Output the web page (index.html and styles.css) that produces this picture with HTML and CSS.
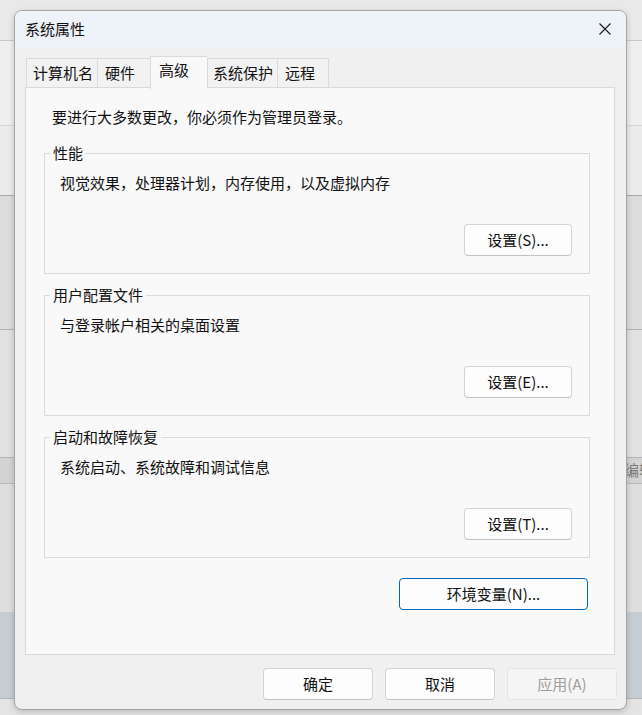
FILE: index.html
```html
<!DOCTYPE html>
<html lang="zh-CN">
<head>
<meta charset="utf-8">
<title>系统属性</title>
<link rel="stylesheet" href="styles.css">
</head>
<body>
<span class="bg-text">编辑</span>
<div class="dialog">
  <div class="titlebar">
    <span class="title">系统属性</span>
    <span class="close" aria-label="关闭">
      <svg width="12" height="12" viewBox="0 0 12 12"><path d="M0.5 0.5 L11.5 11.5 M11.5 0.5 L0.5 11.5" stroke="#1a1a1a" stroke-width="1.1" fill="none"/></svg>
    </span>
  </div>
  <div class="content">
    <div class="tabs">
      <div class="tab tab-w71">计算机名</div>
      <div class="tab tab-w53">硬件</div>
      <div class="tab tab-active">高级</div>
      <div class="tab tab-w70">系统保护</div>
      <div class="tab tab-w52">远程</div>
    </div>
    <div class="panel">
      <p class="intro">要进行大多数更改，你必须作为管理员登录。</p>
      <div class="group">
        <span class="group-label">性能</span>
        <p class="group-desc">视觉效果，处理器计划，内存使用，以及虚拟内存</p>
        <button class="btn btn-settings">设置(S)...</button>
      </div>
      <div class="group">
        <span class="group-label">用户配置文件</span>
        <p class="group-desc">与登录帐户相关的桌面设置</p>
        <button class="btn btn-settings">设置(E)...</button>
      </div>
      <div class="group">
        <span class="group-label">启动和故障恢复</span>
        <p class="group-desc">系统启动、系统故障和调试信息</p>
        <button class="btn btn-settings">设置(T)...</button>
      </div>
      <button class="btn btn-env">环境变量(N)...</button>
    </div>
    <div class="footer">
      <button class="btn btn-footer">确定</button>
      <button class="btn btn-footer">取消</button>
      <button class="btn btn-footer btn-disabled" disabled>应用(A)</button>
    </div>
  </div>
</div>
</body>
</html>
```
FILE: styles.css
```css
html, body {
  margin: 0;
  height: 715px;
  overflow: hidden;
}

body {
  box-sizing: border-box;
  padding: 10px 0 0 14px;
  font-family: "Noto Sans CJK SC", "Noto Sans", sans-serif;
  font-size: 15px;
  line-height: 20px;
  color: #111;
  background: linear-gradient(to bottom,
    #e9e9e9 0, #e9e9e9 40px,
    #c9c9c9 40px, #c9c9c9 41px,
    #efefef 41px, #efefef 125px,
    #d6d6d6 125px, #d6d6d6 126px,
    #ececec 126px, #ececec 195px,
    #a9a9a9 195px, #a9a9a9 196px,
    #dcdcdc 196px, #dcdcdc 329px,
    #b2b2b2 329px, #b2b2b2 330px,
    #e1e1e1 330px, #e1e1e1 457px,
    #b5b5b5 457px, #b5b5b5 458px,
    #d3d3d3 458px, #d3d3d3 483px,
    #b9b9b9 483px, #b9b9b9 484px,
    #dedede 484px, #dedede 612px,
    #c6ced4 612px, #c6ced4 698px,
    #b5b5b5 698px, #b5b5b5 699px,
    #e4e4e4 699px, #e4e4e4 715px);
}

.bg-text {
  position: absolute;
  left: 624px;
  top: 460px;
  color: #7a7a7a;
  font-size: 15px;
  white-space: nowrap;
}

.dialog {
  position: relative;
  box-sizing: border-box;
  width: 613px;
  height: 700px;
  border: 1px solid #a5a5a5;
  border-radius: 8px;
  overflow: hidden;
  display: flex;
  flex-direction: column;
  background: #f0f0f0;
  box-shadow: 0 2px 6px rgba(0, 0, 0, 0.18);
}

.titlebar {
  height: 36px;
  flex: none;
  display: flex;
  align-items: center;
  justify-content: space-between;
  background: #eef3f9;
  padding: 0 15px 0 10px;
}

.close {
  display: flex;
  width: 12px;
  height: 12px;
}

.content {
  flex: 1;
  display: flex;
  flex-direction: column;
  padding: 9px 11px 0 10px;
}

.tabs {
  display: flex;
  align-items: flex-end;
  height: 31px;
  padding-left: 1px;
}

.tab {
  box-sizing: border-box;
  height: 29px;
  padding: 4px 0 0 6px;
  border: 1px solid #dadada;
  border-bottom: none;
  border-right: none;
  background: #f2f2f2;
  white-space: nowrap;
}

.tab-w71 { width: 71px; }
.tab-w53 { width: 53px; padding-left: 7px; }
.tab-w70 { width: 70px; padding-left: 5px; }
.tab-w52 { width: 52px; padding-left: 7px; border-right: 1px solid #dadada; }

.tab-active {
  position: relative;
  z-index: 1;
  width: 57px;
  height: 33px;
  margin-bottom: -2px;
  padding: 3px 0 0 8px;
  background: #f9f9f9;
  border-right: none;
}

.tab-active + .tab {
  border-left: 1px solid #dadada;
}

.panel {
  box-sizing: border-box;
  height: 568px;
  border: 1px solid #d9d9d9;
  background: #f9f9f9;
  padding: 19px 24px 0 18px;
  display: flex;
  flex-direction: column;
}

.intro {
  margin: 0 0 26px 8px;
}

.group {
  position: relative;
  box-sizing: border-box;
  height: 121px;
  border: 1px solid #dadada;
  margin-bottom: 21px;
  padding: 19px 17px 17px 15px;
  display: flex;
  flex-direction: column;
}

.group-label {
  position: absolute;
  left: 5px;
  top: -11px;
  padding: 0 3px;
  background: #f9f9f9;
}

.group-desc {
  margin: 0;
}

.btn {
  box-sizing: border-box;
  height: 32px;
  font-family: inherit;
  font-size: 15px;
  line-height: 20px;
  color: #111;
  background: #fdfdfd;
  border: 1px solid #d3d3d3;
  border-bottom-color: #c2c2c2;
  border-radius: 4px;
  padding: 0;
}

.btn-settings {
  width: 108px;
  margin-top: auto;
  align-self: flex-end;
}

.btn-env {
  width: 189px;
  margin: -1px 2px 0 0;
  align-self: flex-end;
  border: 1px solid #0067c0;
}

.footer {
  display: flex;
  justify-content: flex-end;
  gap: 12px;
  margin-right: -2px;
  padding-top: 13px;
}

.btn-footer {
  width: 110px;
}

.btn-disabled {
  background: #f5f5f5;
  border-color: #e5e5e5;
  color: #9d9d9d;
}
```
